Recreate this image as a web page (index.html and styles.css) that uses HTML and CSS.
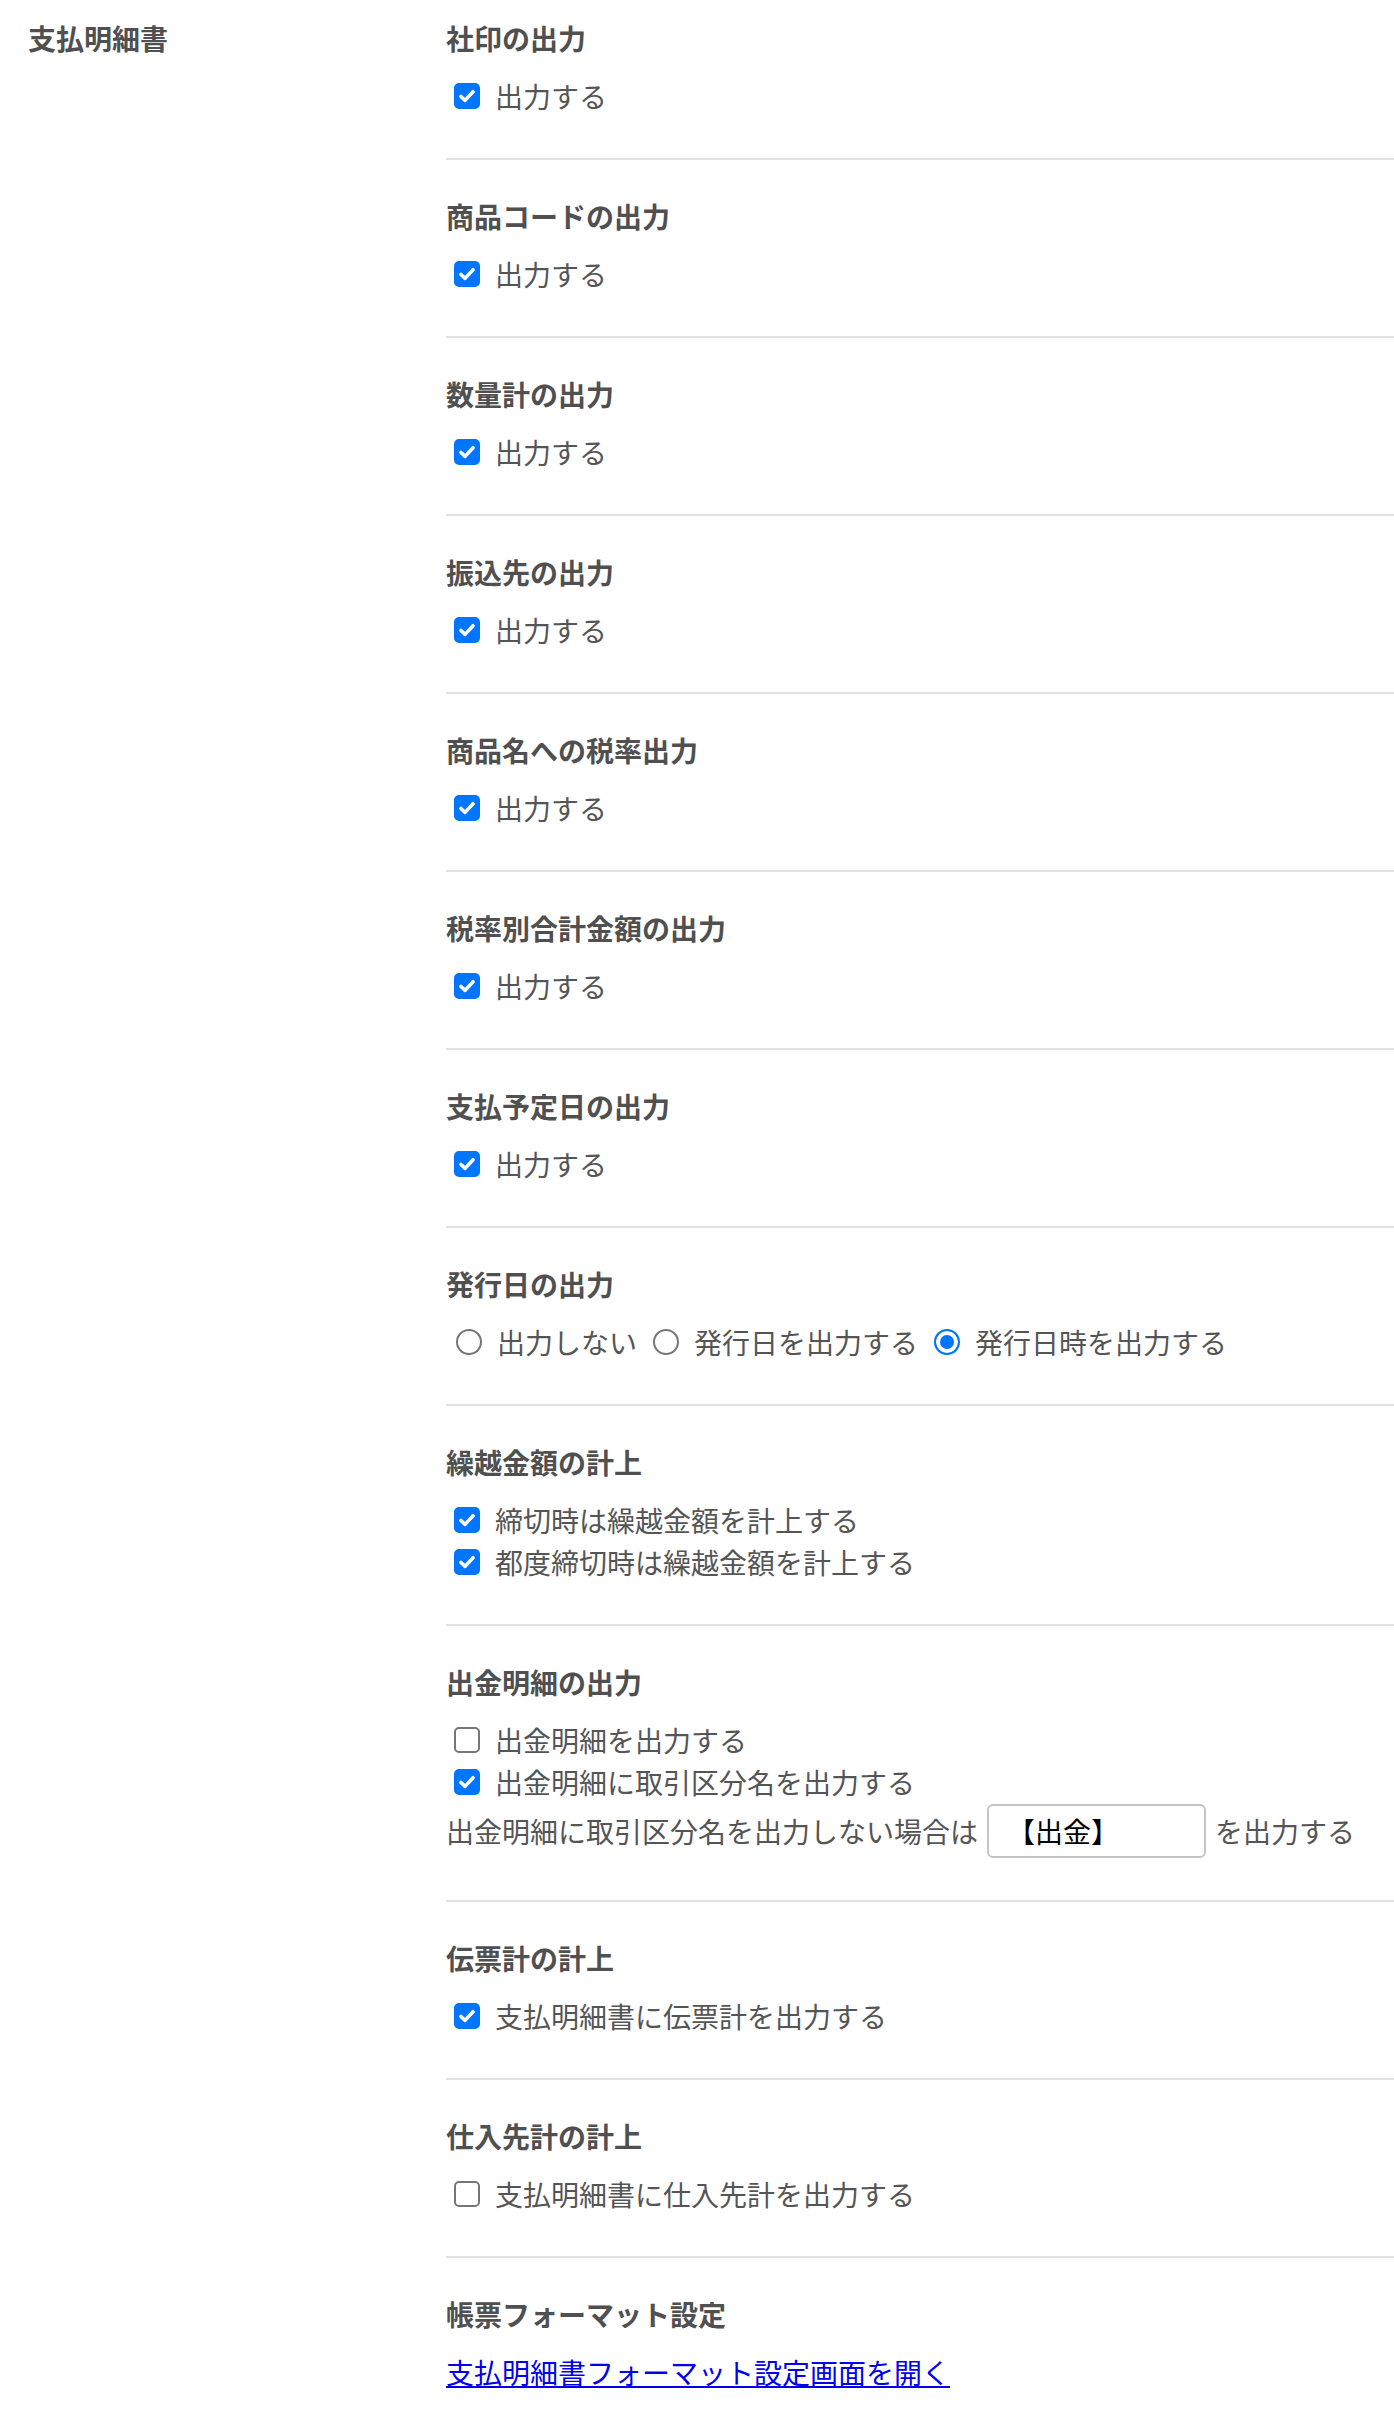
FILE: index.html
```html
<!DOCTYPE html>
<html lang="ja">

<head>
    <meta charset="UTF-8">
    <meta name="viewport" content="width=device-width, initial-scale=1.0">
    <title>支払明細書</title>
    <link rel="stylesheet" href="styles.css">
</head>

<body>
    <div class="page">
        <div class="side-label">支払明細書</div>

        <div class="settings">
            <section class="setting">
                <h3>社印の出力</h3>
                <label class="opt"><input type="checkbox" checked>出力する</label>
            </section>

            <section class="setting">
                <h3>商品コードの出力</h3>
                <label class="opt"><input type="checkbox" checked>出力する</label>
            </section>

            <section class="setting">
                <h3>数量計の出力</h3>
                <label class="opt"><input type="checkbox" checked>出力する</label>
            </section>

            <section class="setting">
                <h3>振込先の出力</h3>
                <label class="opt"><input type="checkbox" checked>出力する</label>
            </section>

            <section class="setting">
                <h3>商品名への税率出力</h3>
                <label class="opt"><input type="checkbox" checked>出力する</label>
            </section>

            <section class="setting">
                <h3>税率別合計金額の出力</h3>
                <label class="opt"><input type="checkbox" checked>出力する</label>
            </section>

            <section class="setting">
                <h3>支払予定日の出力</h3>
                <label class="opt"><input type="checkbox" checked>出力する</label>
            </section>

            <section class="setting">
                <h3>発行日の出力</h3>
                <div class="radios">
                    <label class="opt"><input type="radio" name="issueDate">出力しない</label>
                    <label class="opt"><input type="radio" name="issueDate">発行日を出力する</label>
                    <label class="opt"><input type="radio" name="issueDate" checked>発行日時を出力する</label>
                </div>
            </section>

            <section class="setting">
                <h3>繰越金額の計上</h3>
                <label class="opt"><input type="checkbox" checked>締切時は繰越金額を計上する</label>
                <label class="opt"><input type="checkbox" checked>都度締切時は繰越金額を計上する</label>
            </section>

            <section class="setting">
                <h3>出金明細の出力</h3>
                <label class="opt"><input type="checkbox">出金明細を出力する</label>
                <label class="opt"><input type="checkbox" checked>出金明細に取引区分名を出力する</label>
                <div class="opt-text">
                    出金明細に取引区分名を出力しない場合は<input type="text" class="text-input" value="【出金】">を出力する
                </div>
            </section>

            <section class="setting">
                <h3>伝票計の計上</h3>
                <label class="opt"><input type="checkbox" checked>支払明細書に伝票計を出力する</label>
            </section>

            <section class="setting">
                <h3>仕入先計の計上</h3>
                <label class="opt"><input type="checkbox">支払明細書に仕入先計を出力する</label>
            </section>

            <section class="setting">
                <h3>帳票フォーマット設定</h3>
                <div class="link-row"><a href="#">支払明細書フォーマット設定画面を開く</a></div>
            </section>
        </div>
    </div>
</body>

</html>
```

FILE: styles.css
```css
body {
    margin: 0;
    font-family: "Noto Sans CJK JP", "Noto Sans", sans-serif;
    font-size: 28px;
    color: #555;
    background: #fff;
}

.page {
    display: flex;
    padding: 17px 0 0 28px;
}

.side-label {
    width: 418px;
    flex-shrink: 0;
    font-weight: bold;
    line-height: 42px;
    color: #505050;
}

.settings {
    flex: 1;
}

.setting {
    padding: 35px 0 41px;
    border-bottom: 2px solid #dee2e6;
}

.setting:first-child {
    padding-top: 0;
}

.setting:last-child {
    border-bottom: none;
    padding-bottom: 24px;
}

.setting h3 {
    margin: 0 0 16px;
    font-size: inherit;
    font-weight: bold;
    line-height: 42px;
    color: #505050;
}

.opt {
    display: flex;
    align-items: center;
    line-height: 42px;
    cursor: pointer;
}

.opt input[type="checkbox"],
.opt input[type="radio"] {
    appearance: none;
    -webkit-appearance: none;
    flex-shrink: 0;
    width: 26px;
    height: 26px;
    margin: 0 15px 0 8px;
    border: 2px solid #767676;
    background: #fff;
    cursor: pointer;
}

.opt input[type="checkbox"] {
    border-radius: 5px;
}

.opt input[type="checkbox"]:checked {
    border-color: #0075ff;
    background: #0075ff url("data:image/svg+xml,%3Csvg xmlns='http://www.w3.org/2000/svg' viewBox='0 0 16 16'%3E%3Cpath d='M3.6 8.3 6.6 11.2 12.4 4.9' fill='none' stroke='%23fff' stroke-width='2.6' stroke-linecap='round' stroke-linejoin='round'/%3E%3C/svg%3E") center / 100% 100% no-repeat;
}

.radios {
    display: flex;
    gap: 6px;
}

.opt input[type="radio"] {
    border-radius: 50%;
    margin-left: 10px;
}

.opt input[type="radio"]:checked {
    border-color: #0075ff;
    background: #0075ff;
    box-shadow: inset 0 0 0 4px #fff;
}

.opt-text {
    display: flex;
    align-items: center;
    min-height: 56px;
}

.text-input {
    width: 219px;
    height: 54px;
    box-sizing: border-box;
    margin: 0 9px;
    padding: 0 18px;
    border: 2px solid #c4c4c4;
    border-radius: 6px;
    font-family: inherit;
    font-size: 28px;
    color: #000;
}

.link-row {
    line-height: 42px;
}

.link-row a {
    color: #0000ee;
}
```
